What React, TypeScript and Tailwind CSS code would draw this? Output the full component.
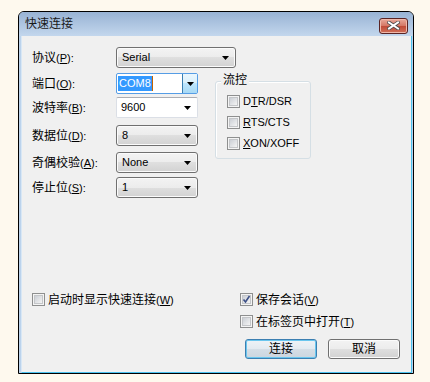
import type { ReactNode } from 'react';

const FONT = '"Liberation Sans", "Noto Sans CJK SC", sans-serif';

// Latin part of a label, e.g. (P): with the access key underlined
const Key = ({ k, colon = false }: { k: string; colon?: boolean }) => (
  <span className="text-[11px]">
    (<span className="underline underline-offset-[1px]">{k}</span>){colon ? ':' : ''}
  </span>
);

const Arrow = () => (
  <svg width="7" height="4" viewBox="0 0 7 4" className="shrink-0">
    <path d="M0 0h7L3.5 4z" fill="#000" />
  </svg>
);

const DropList = ({ value, width }: { value: string; width: string }) => (
  <div
    className={`${width} flex h-[21px] items-center justify-between rounded-[3px] border border-[#707070] bg-[linear-gradient(#f3f3f3,#ececec_50%,#dfdfdf_50%,#d2d2d2)] pl-[5px] pr-[6px] text-[11px] shadow-[inset_0_0_0_1px_#fbfbfb]`}
  >
    <span>{value}</span>
    <Arrow />
  </div>
);

const Check = ({ checked = false }: { checked?: boolean }) => (
  <div className="flex h-[13px] w-[13px] shrink-0 items-center justify-center border border-[#8e8f8f] bg-[#f4f4f4] p-[1px]">
    <div className="relative h-full w-full border border-[#c4c6c9] bg-[linear-gradient(135deg,#cbcfd5,#f4f4f4)]">
      {checked && (
        <svg width="9" height="9" viewBox="0 0 9 9" className="absolute -left-[1px] -top-[1px]">
          <path d="M1.5 4.5l2 2.5 4-6" fill="none" stroke="#3c4f86" strokeWidth="1.6" />
        </svg>
      )}
    </div>
  </div>
);

const CheckRow = ({ checked, children }: { checked?: boolean; children: ReactNode }) => (
  <div className="flex h-[13px] items-center gap-[3px] leading-none">
    <Check checked={checked} />
    <span className="whitespace-nowrap">{children}</span>
  </div>
);

const Row = ({ label, children, className = '' }: { label: ReactNode; children: ReactNode; className?: string }) => (
  <div className={`flex h-[21px] items-center ${className}`}>
    <div className="w-[84px] whitespace-nowrap text-[12px]">{label}</div>
    {children}
  </div>
);

const Button = ({ children, primary = false }: { children: ReactNode; primary?: boolean }) => (
  <div
    className={
      primary
        ? 'flex h-[20px] w-[72px] items-center justify-center rounded-[3px] border border-[#3c7fb1] bg-[linear-gradient(#eef3f7,#e3eaf0_50%,#d5dee6_50%,#ccd6df)] text-[12px] shadow-[inset_0_0_0_1px_#6ac6ee]'
        : 'flex h-[20px] w-[72px] items-center justify-center rounded-[3px] border border-[#707070] bg-[linear-gradient(#f3f3f3,#ececec_50%,#dfdfdf_50%,#d2d2d2)] text-[12px] shadow-[inset_0_0_0_1px_#fbfbfb]'
    }
  >
    {children}
  </div>
);

export default function App() {
  return (
    <div className="h-[382px] w-[430px] bg-[#fef9ee] pl-[18px] pt-[11px] text-black" style={{ fontFamily: FONT }}>
      <div className="flex h-[363px] w-[396px] flex-col rounded-t-[6px] border border-black bg-[#bcd3ec]">
        {/* title bar */}
        <div className="flex h-[24px] items-center justify-between rounded-t-[5px] bg-[linear-gradient(#98b3d4,#c3d7ed)] pl-[6px] pr-[5px]">
          <span className="text-[12px] text-[#1a1a1a]">快速连接</span>
          <div className="mt-[3px] flex h-[16px] w-[29px] items-center justify-center rounded-[3px] border border-[#5a2424] bg-[linear-gradient(#e9a99a,#d47664_50%,#c04a36_50%,#d0705a)] shadow-[inset_0_0_0_1px_#f0b8aa]">
            <svg width="13" height="9" viewBox="0 0 13 9">
              <path d="M2 1.5l9 6M11 1.5l-9 6" stroke="#4a4a4a" strokeWidth="3.6" strokeLinecap="square" />
              <path d="M2 1.5l9 6M11 1.5l-9 6" stroke="#fff" strokeWidth="2" strokeLinecap="square" />
            </svg>
          </div>
        </div>

        {/* client area */}
        <div className="ml-[2px] mr-[1px] flex flex-1 flex-col border-b border-l border-r border-b-[#4cc3ef] border-l-[#d8e7f5] border-r-[#4cc3ef] bg-[#f0f0f0] pb-[13px] pl-[10px] pr-[10px] pt-[11px] text-[12px]">
          <Row label={<>协议<Key k="P" colon /></>}>
            <DropList value="Serial" width="w-[120px]" />
          </Row>

          <div className="mt-[5px] flex">
            <div className="flex flex-col">
              <Row label={<>端口<Key k="O" colon /></>}>
                <div className="flex h-[21px] w-[82px] items-stretch rounded-[2px] border border-[#569de5] bg-white">
                  <div className="flex flex-1 items-center pl-[1px] text-[11px]">
                    <span className="bg-[#3399ff] px-[1px] leading-[15px] text-white">COM8</span>
                    <span className="h-[15px] w-[1px] bg-[#c86400]" />
                  </div>
                  <div className="flex w-[15px] items-center justify-center border-l border-[#3c7fb1] bg-[linear-gradient(#eaf6fd,#d9f0fc_50%,#bee6fd_50%,#a7d9f5)]">
                    <Arrow />
                  </div>
                </div>
              </Row>
              <Row label={<>波特率<Key k="B" colon /></>} className="mt-[3px]">
                <div className="flex h-[21px] w-[82px] items-center justify-between rounded-[2px] border border-[#dbdfe6] border-t-[#abadb3] bg-white pl-[4px] pr-[6px] text-[11px]">
                  <span>9600</span>
                  <Arrow />
                </div>
              </Row>
              <Row label={<>数据位<Key k="D" colon /></>} className="mt-[7px]">
                <DropList value="8" width="w-[82px]" />
              </Row>
              <Row label={<>奇偶校验<Key k="A" colon /></>} className="mt-[6px]">
                <DropList value="None" width="w-[82px]" />
              </Row>
              <Row label={<>停止位<Key k="S" colon /></>} className="mt-[4px]">
                <DropList value="1" width="w-[82px]" />
              </Row>
            </div>

            {/* flow control group */}
            <div className="relative ml-[17px] mt-[8px] flex h-[78px] w-[96px] flex-col gap-[8px] rounded-[3px] border border-[#d5dfe5] pl-[11px] pt-[13px] text-[11px] shadow-[inset_1px_1px_0_#fff]">
              <span className="absolute -top-[10px] left-[5px] bg-[#f0f0f0] px-[2px] text-[12px] leading-[16px]">流控</span>
              <CheckRow>D<span className="underline underline-offset-[1px]">T</span>R/DSR</CheckRow>
              <CheckRow><span className="underline underline-offset-[1px]">R</span>TS/CTS</CheckRow>
              <CheckRow><span className="underline underline-offset-[1px]">X</span>ON/XOFF</CheckRow>
            </div>
          </div>

          {/* bottom options */}
          <div className="mt-auto flex">
            <div className="w-[208px]">
              <CheckRow>启动时显示快速连接<Key k="W" /></CheckRow>
            </div>
            <div className="flex flex-col gap-[9px]">
              <CheckRow checked>保存会话<Key k="V" /></CheckRow>
              <CheckRow>在标签页中打开<Key k="T" /></CheckRow>
            </div>
          </div>

          <div className="mt-[11px] flex justify-end gap-[11px] pr-[1px]">
            <Button primary>连接</Button>
            <Button>取消</Button>
          </div>
        </div>
      </div>
    </div>
  );
}
